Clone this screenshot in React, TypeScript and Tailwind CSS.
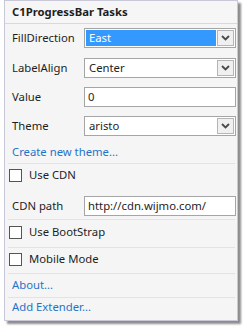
import React from "react";

const font = { fontFamily: '"Noto Sans", "Open Sans", sans-serif' };

function Chevron() {
    return (
        <svg width="9" height="6" viewBox="0 0 9 6">
            <path d="M1 1 L4.5 4.5 L8 1" fill="none" stroke="#4a4a4a" strokeWidth="1.8" />
        </svg>
    );
}

function Select({ value, active }: { value: string; active?: boolean }) {
    return (
        <div className="flex items-center w-[152px] h-[20px] border border-[#a5a5a5] bg-white p-px">
            <div
                className={
                    active
                        ? "flex-1 h-full flex items-center pl-[3px] bg-[#3399ff] text-white"
                        : "flex-1 h-full flex items-center pl-[3px] text-[#1e1e1e]"
                }
            >
                {value}
            </div>
            <div className="ml-px w-[17px] h-full flex items-center justify-center border border-[#b5b5b5] bg-[#f0f0f0]">
                <Chevron />
            </div>
        </div>
    );
}

function Input({ value }: { value: string }) {
    return (
        <div className="flex items-center w-[152px] h-[20px] border border-[#a5a5a5] bg-white pl-[3px] text-[#1e1e1e]">
            {value}
        </div>
    );
}

function Field({ label, children, className }: { label: string; children: React.ReactNode; className: string }) {
    return (
        <div className={"flex items-center " + className}>
            <div className="w-[79px] pl-[7px] text-[#1e1e1e]">{label}</div>
            {children}
        </div>
    );
}

function Check({ label, className }: { label: string; className: string }) {
    return (
        <div className={"flex items-center h-[18px] pl-[4px] " + className}>
            <div className="w-[13px] h-[13px] border border-[#555] bg-white" />
            <span className="ml-[7px] text-[#1e1e1e]">{label}</span>
        </div>
    );
}

function Sep({ className }: { className: string }) {
    return <div className={"h-px bg-[#e3e3e3] ml-[3px] mr-[2px] " + className} />;
}

function Link({ label, className }: { label: string; className: string }) {
    return <div className={"flex items-center h-[18px] pl-[7px] text-[#1f74c9] " + className}>{label}</div>;
}

export default function App() {
    return (
        <div className="w-[248px] h-[333px] bg-white pl-[4px]" style={font}>
            <div className="w-[234px] h-[321px] flex flex-col bg-[#f5f5f5] border border-[#c8c8d8] text-[11.3px] leading-[16px] shadow-[3px_3px_2px_rgba(0,0,0,0.45)]">
                <div className="h-[23px] flex items-center pl-[7px] font-bold text-[#1e1e1e] bg-[#f6f6f6] border-b border-[#d8d8e4]">
                    C1ProgressBar Tasks
                </div>

                <Field label="FillDirection" className="mt-[4px]">
                    <Select value="East" active />
                </Field>
                <Field label="LabelAlign" className="mt-[10px]">
                    <Select value="Center" />
                </Field>
                <Field label="Value" className="mt-[9px]">
                    <Input value="0" />
                </Field>
                <Field label="Theme" className="mt-[9px]">
                    <Select value="aristo" />
                </Field>

                <Link label="Create new theme..." className="mt-[7px]" />
                <Sep className="mt-[2px]" />

                <Check label="Use CDN" className="mt-[2px]" />
                <Field label="CDN path" className="mt-[12px]">
                    <Input value="http://cdn.wijmo.com/" />
                </Field>
                <Sep className="mt-[3px]" />

                <Check label="Use BootStrap" className="mt-[3px]" />
                <Sep className="mt-[6px]" />

                <Check label="Mobile Mode" className="mt-[2px]" />
                <Sep className="mt-[5px]" />

                <Link label="About..." className="mt-[2px]" />
                <Sep className="mt-[3px]" />

                <Link label="Add Extender..." className="mt-0" />
            </div>
        </div>
    );
}
